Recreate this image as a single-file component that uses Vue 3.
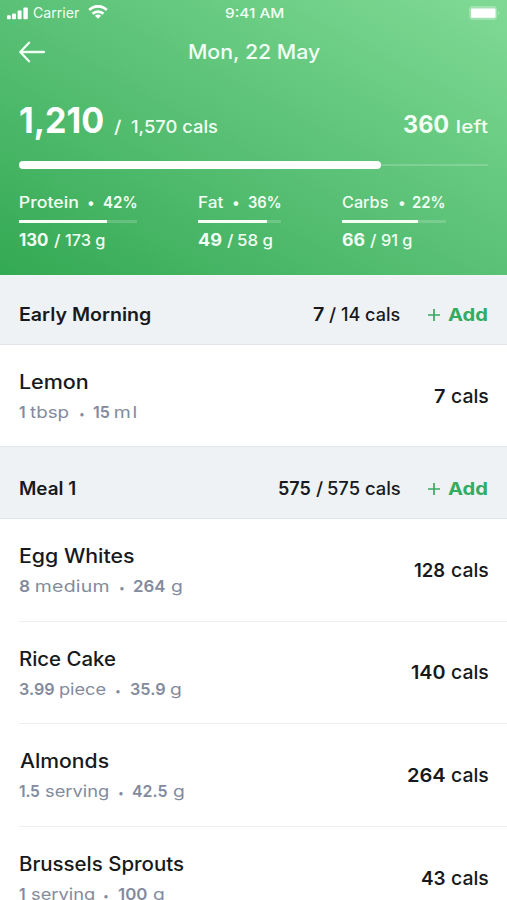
<script setup>
// Text pieces are [text, width, gap before, class]
const summary = [['1,210', 83, 0.5, 'huge'], ['/', 8, 11.5, 'med'], ['1,570 cals', 86.5, 9, 'med']]
const left = [['360', 45, 0, 'large'], ['left', 31, 8.5, 'med']]

const macros = [
  {
    width: 118, fill: 88,
    label: [['Protein', 58.5, 0.8], ['•', 4, 10.2], ['42%', 34, 10.5, 'bold']],
    value: [['130', 29, 0, 'amount'], ['/', 6.5, 6], ['173 g', 39.5, 4.5]]
  },
  {
    width: 83, fill: 69,
    label: [['Fat', 24, 1], ['•', 4, 10], ['36%', 33, 10.5, 'bold']],
    value: [['49', 24, 0, 'amount'], ['/', 6.5, 5.2], ['58 g', 34, 4.8]]
  },
  {
    width: 104, fill: 76,
    label: [['Carbs', 46, 0.3], ['•', 4, 10.5], ['22%', 33, 9.5, 'bold']],
    value: [['66', 23, 0, 'amount'], ['/', 6.5, 5], ['91 g', 30.5, 4.5]]
  }
]

const meals = [
  {
    name: ['Early Morning', 131],
    total: [['7', 11, 0, 'bold'], ['/', 7.5, 5], ['14 cals', 58.5, 4.5]],
    foods: [
      {
        name: ['Lemon', 68],
        detail: [['1', 5.5, 0, 'bold'], ['tbsp', 39, 5.5], ['•', 3, 10.5, 'dot'], ['15', 16.5, 10.5, 'bold'], ['ml', 21, 5.5]],
        cals: ['7', 11.5]
      }
    ]
  },
  {
    name: ['Meal 1', 55.5],
    total: [['575', 31.5, 0, 'bold'], ['/', 7.5, 5], ['575 cals', 72, 4.5]],
    foods: [
      {
        name: ['Egg Whites', 114],
        detail: [['8', 10.5, 0, 'bold'], ['medium', 73, 6], ['•', 3, 11, 'dot'], ['264', 31.5, 11, 'bold'], ['g', 10.5, 5.5]],
        cals: ['128', 31]
      },
      {
        name: ['Rice Cake', 95.5],
        detail: [['3.99', 35, 0, 'bold'], ['piece', 45.5, 6], ['•', 3, 10.5, 'dot'], ['35.9', 35, 10.5, 'bold'], ['g', 10.5, 5.5]],
        cals: ['140', 34]
      },
      {
        name: ['Almonds', 88.5],
        detail: [['1.5', 20.5, 0, 'bold'], ['serving', 63, 5.5], ['•', 3, 10.5, 'dot'], ['42.5', 35, 10.5, 'bold'], ['g', 10.5, 5.5]],
        cals: ['264', 37]
      },
      {
        name: ['Brussels Sprouts', 163.5],
        detail: [['1', 5.5, 0, 'bold'], ['serving', 63, 6], ['•', 3, 10.5, 'dot'], ['100', 29.5, 10.5, 'bold'], ['g', 10.5, 5.5]],
        cals: ['43', 24.5]
      }
    ]
  }
]

// Fits a label to its width: stretches the glyphs a little, then tracks the rest
const ctx = document.createElement('canvas').getContext('2d')
const vFit = {
  mounted(el, { value: width }) {
    const cs = getComputedStyle(el)
    ctx.font = `${cs.fontWeight} ${cs.fontSize} Inter`
    const text = el.textContent
    const m = ctx.measureText(text)
    const ink = m.actualBoundingBoxLeft + m.actualBoundingBoxRight
    const scale = Math.min(1.18, Math.max(0.94, width / ink))
    const tracking = text.length > 1 ? (width / scale - ink) / (text.length - 1) : 0
    el.style.width = width + 'px'
    el.style.letterSpacing = tracking + 'px'
    el.style.textIndent = m.actualBoundingBoxLeft + 'px'
    el.style.transform = `scaleX(${scale})`
  }
}
</script>

<template>
  <main class="screen">
    <header class="hero">
      <div class="status">
        <div class="side">
          <svg class="signal" width="22" height="13" viewBox="0 0 22 13" fill="#fff">
            <rect x="0" y="8.3" width="3.8" height="4" rx="1" />
            <rect x="5" y="6.4" width="4" height="5.9" rx="1" />
            <rect x="10.6" y="3.6" width="4" height="8.7" rx="1" />
            <rect x="16.4" y="0.4" width="4.4" height="11.9" rx="1" />
          </svg>
          <span v-fit="46" class="t carrier">Carrier</span>
          <svg class="wifi" width="20" height="14" viewBox="0 0 20 14" fill="none" stroke="#fff" stroke-width="2.7">
            <path d="M1.2 5C6.2 .1 13.8 .1 18.8 5" />
            <path d="M4.5 8.8C7.6 5.8 12.4 5.8 15.5 8.8" />
            <path d="M10 13.8L6.9 10.8Q10 8.3 13.1 10.8Z" fill="#fff" stroke="none" />
          </svg>
        </div>
        <span v-fit="59" class="t clock">9:41 AM</span>
        <div class="side end">
          <svg width="32" height="16" viewBox="0 0 32 16">
            <rect x="0" y="1" width="28" height="14" rx="3.5" fill="#fff" opacity=".28" />
            <path d="M29 6q3 2 0 4z" fill="#fff" opacity=".3" />
            <rect x="2" y="3.4" width="24.5" height="9.4" rx="1" fill="#fff" />
          </svg>
        </div>
      </div>

      <div class="bar">
        <svg class="back" width="28" height="22" viewBox="0 0 28 22" fill="none" stroke="#effff2" stroke-width="2.3" stroke-linecap="round" stroke-linejoin="round">
          <path d="M25 11H1.3M10 1.7L1.3 11L10 20.3" />
        </svg>
        <span v-fit="132" class="t title">Mon, 22 May</span>
      </div>

      <div class="summary">
        <div class="line">
          <span v-for="p in summary" :key="p[0]" v-fit="p[1]" class="t" :class="p[3]" :style="{ marginLeft: p[2] + 'px' }">{{ p[0] }}</span>
        </div>
        <div class="line">
          <span v-for="p in left" :key="p[0]" v-fit="p[1]" class="t" :class="p[3]" :style="{ marginLeft: p[2] + 'px' }">{{ p[0] }}</span>
        </div>
      </div>
      <div class="progress"><div class="done"></div><div class="rest"></div></div>

      <div class="macros">
        <div v-for="m in macros" :key="m.width" :style="{ width: m.width + 'px' }">
          <div class="line label">
            <span v-for="p in m.label" :key="p[0]" v-fit="p[1]" class="t" :class="p[3]" :style="{ marginLeft: p[2] + 'px' }">{{ p[0] }}</span>
          </div>
          <div class="track"><div class="fill" :style="{ width: m.fill + 'px' }"></div></div>
          <div class="line value">
            <span v-for="p in m.value" :key="p[0]" v-fit="p[1]" class="t" :class="p[3]" :style="{ marginLeft: p[2] + 'px' }">{{ p[0] }}</span>
          </div>
        </div>
      </div>
    </header>

    <section v-for="meal in meals" :key="meal.name[0]" class="meal">
      <div class="head">
        <span v-fit="meal.name[1]" class="t bold">{{ meal.name[0] }}</span>
        <div class="line total">
          <span v-for="(p, i) in meal.total" :key="i" v-fit="p[1]" class="t" :class="p[3]" :style="{ marginLeft: p[2] + 'px' }">{{ p[0] }}</span>
        </div>
        <div class="add">
          <svg width="12" height="12" viewBox="0 0 12 12" stroke="#34ab60" stroke-width="1.7"><path d="M0 6H12M6 0V12" /></svg>
          <span v-fit="39.5" class="t">Add</span>
        </div>
      </div>
      <div v-for="food in meal.foods" :key="food.name[0]" class="food">
        <div>
          <div class="name"><span v-fit="food.name[1]" class="t">{{ food.name[0] }}</span></div>
          <div class="line detail">
            <span v-for="(p, i) in food.detail" :key="i" v-fit="p[1]" class="t" :class="p[3]" :style="{ marginLeft: p[2] + 'px' }">{{ p[0] }}</span>
          </div>
        </div>
        <div class="line cals">
          <span v-fit="food.cals[1]" class="t bold">{{ food.cals[0] }}</span>
          <span v-fit="37.5" class="t unit">cals</span>
        </div>
      </div>
    </section>
  </main>
</template>

<style>
body { margin: 0; overflow: hidden; }
</style>

<style scoped>
.screen { width: 507px; height: 900px; overflow: hidden; background: #fff; color: #17191c; font-family: Inter, "Liberation Sans", sans-serif; font-weight: 500; }
.t { display: block; flex: none; white-space: nowrap; transform-origin: left center; }
.line { display: flex; align-items: baseline; }
.bold { font-weight: 600; }

.hero { height: 275px; box-sizing: border-box; color: #f2fff5; background: linear-gradient(to top right, #34a954, #5ac176 50%, #80da95); }
.status { height: 26px; display: grid; grid-template-columns: 1fr 59px 1fr; align-items: center; padding: 0 6px 0 7px; line-height: 26px; }
.side { display: flex; align-items: center; }
.end { justify-content: flex-end; }
.carrier { margin-left: 4px; font-size: 14px; font-weight: 400; }
.wifi { margin: 0 0 2px 9px; }
.clock { font-size: 13.5px; font-weight: 500; }
.bar { height: 53px; display: grid; grid-template-columns: 170px 132px; align-items: center; padding-left: 19px; }
.back { margin-bottom: 2px; }
.title { font-size: 20px; font-weight: 500; line-height: 53px; }
.summary { height: 82px; display: flex; align-items: baseline; justify-content: space-between; padding: 0 19px; line-height: 40px; }
.huge { font-size: 36px; font-weight: 700; line-height: 82px; color: #fff; }
.large { font-size: 24px; font-weight: 700; }
.med { font-size: 17.5px; }
.progress { display: flex; align-items: center; padding: 0 19px; }
.done { width: 362px; height: 7.5px; border-radius: 4px; background: #fff; }
.rest { flex: 1; height: 2px; background: rgba(255, 255, 255, .18); }
.macros { display: flex; gap: 61px; padding: 21px 19px 0; line-height: 24px; font-size: 16px; }
.label { height: 24px; font-size: 15.5px; line-height: 25px; }
.track { margin-top: 6.5px; height: 2.5px; background: rgba(255, 255, 255, .18); }
.fill { height: 100%; background: #f5fff6; }
.value { height: 24px; margin-top: 5.5px; }
.amount { font-size: 17px; font-weight: 700; }

.head { height: 73px; box-sizing: border-box; display: flex; align-items: flex-end; padding: 0 19px 17.5px 20px; background: #eef2f5; border-top: 1px solid #e5e8eb; border-bottom: 1px solid #e0e4e9; font-size: 18px; line-height: 24px; }
.hero + .meal .head { height: 70px; border-top-color: #f2f7f6; }
.total { margin-left: auto; }
.add { display: flex; align-items: center; gap: 8.5px; margin-left: 28px; margin-right: 0.5px; color: #34ab60; font-weight: 700; }
.food { height: 102.7px; box-sizing: border-box; display: flex; justify-content: space-between; margin-left: 19px; padding: 23px 19px 0 0; border-bottom: 1.5px solid #eceef0; }
.food:last-child { border-bottom: 0; }
.hero + .meal .food { height: 101px; }
.name { padding-left: 1px; font-size: 19.5px; line-height: 28px; }
.detail { margin-top: 4px; font-size: 16.5px; line-height: 24px; font-weight: 400; color: #838b9d; }
.dot { font-size: 11px; line-height: 20px; }
.cals { margin-top: 14.5px; height: 28px; font-size: 19px; line-height: 28px; }
.unit { margin-left: 5.5px; }
</style>
